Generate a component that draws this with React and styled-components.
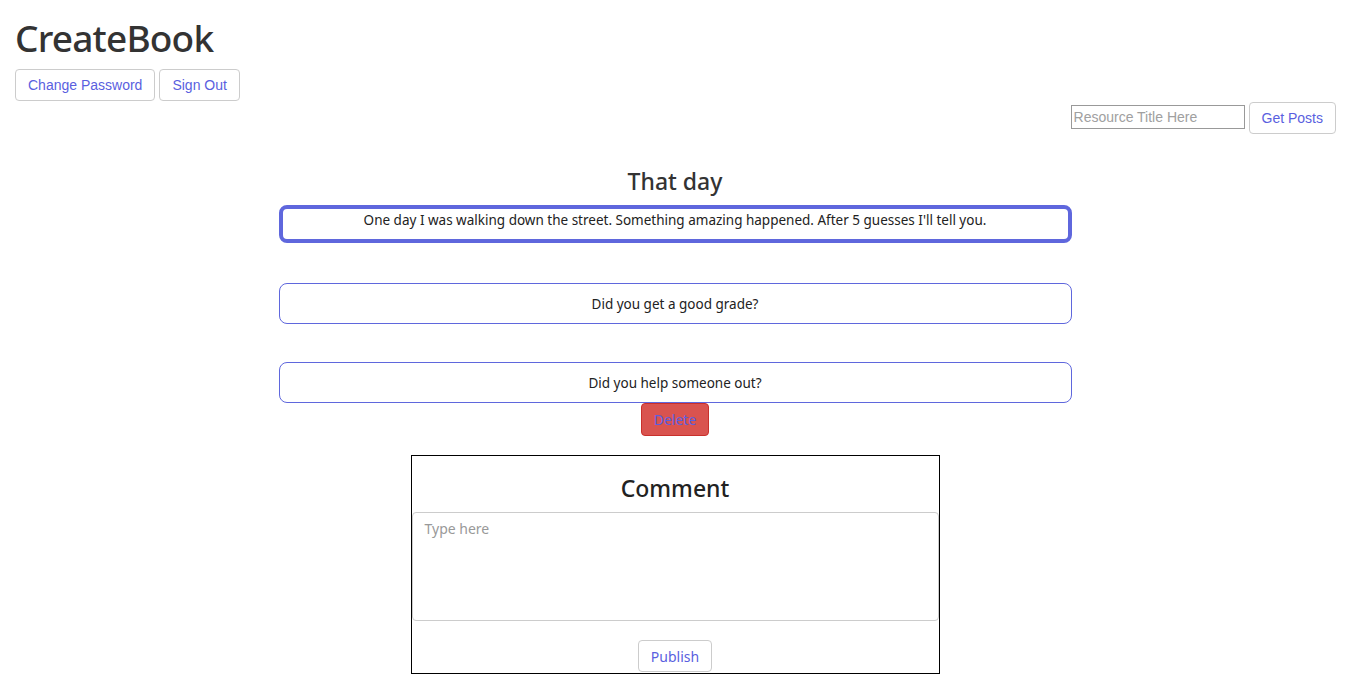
import React from "react";
import styled, { createGlobalStyle } from "styled-components";

const GlobalStyle = createGlobalStyle`
  html, body {
    margin: 0;
    padding: 0;
    background: #fff;
    font-family: "Noto Sans", "Open Sans", sans-serif;
    color: #333;
  }
  * { box-sizing: border-box; }
`;

const Page = styled.div`
  width: 1348px;
  height: 674px;
  overflow: hidden;
`;

const Header = styled.header`
  padding: 12px 12px 0 15px;
`;

const Brand = styled.h1`
  margin: 0;
  font-size: 37px;
  font-weight: 500;
  letter-spacing: -0.8px;
  line-height: 52px;
  color: #333;
`;

const ButtonRow = styled.div`
  display: flex;
  gap: 4px;
  margin-top: 5px;
`;

const Button = styled.button`
  height: ${(p) => p.$h || "32px"};
  padding: 0 12px;
  border: 1px solid ${(p) => (p.$danger ? "#c9302c" : "#ccc")};
  border-radius: 4px;
  background: ${(p) => (p.$danger ? "#d9534f" : "#fff")};
  color: #5a5fe0;
  font-family: ${(p) =>
    p.$ubuntu ? `"Noto Sans", sans-serif` : `"Liberation Sans", Arial, sans-serif`};
  font-size: 14px;
  cursor: pointer;
`;

const SearchRow = styled.div`
  display: flex;
  justify-content: flex-end;
  align-items: center;
  gap: 4px;
  margin-top: 1px;
`;

const SearchInput = styled.input`
  width: 174px;
  height: 24px;
  margin-bottom: 2px;
  border: 1px solid #999;
  padding: 0 2px;
  font-family: "Liberation Sans", Arial, sans-serif;
  font-size: 14px;
  &::placeholder { color: #a0a0a0; }
`;

const Main = styled.main`
  display: flex;
  flex-direction: column;
  align-items: center;
  padding-left: 2px;
`;

const PostTitle = styled.h2`
  margin: 33px 0 10px;
  font-size: 23px;
  font-weight: 500;
  line-height: 28px;
  color: #333;
`;

const QuestionBox = styled.div`
  width: 793px;
  border: ${(p) => (p.$active ? "4px" : "1px")} solid #5f67dd;
  border-radius: 8px;
  height: ${(p) => (p.$active ? "38px" : "41px")};
  margin-bottom: ${(p) => p.$gap};
  display: flex;
  justify-content: center;
  align-items: ${(p) => (p.$active ? "flex-start" : "center")};
  padding-top: ${(p) => (p.$active ? "2px" : "0")};
  font-size: 13.5px;
  color: #222;
`;

const CommentCard = styled.section`
  width: 529px;
  margin-top: 19px;
  border: 1px solid #000;
  display: flex;
  flex-direction: column;
  align-items: center;
  padding-bottom: 1px;
`;

const CommentTitle = styled.h2`
  margin: 18px 0 10px;
  font-size: 23px;
  font-weight: 500;
  line-height: 28px;
  color: #222;
`;

const TextArea = styled.textarea`
  width: 527px;
  height: 109px;
  border: 1px solid #ccc;
  border-radius: 4px;
  padding: 6px 12px;
  resize: none;
  font-family: "Noto Sans", sans-serif;
  font-size: 14px;
  margin-bottom: 19px;
  &::placeholder { color: #999; }
`;

const questions = [
  { text: "One day I was walking down the street. Something amazing happened. After 5 guesses I'll tell you.", active: true, gap: "40px" },
  { text: "Did you get a good grade?", gap: "38px" },
  { text: "Did you help someone out?", gap: "0" },
];

export default function App() {
  return (
    <Page>
      <GlobalStyle />
      <Header>
        <Brand>CreateBook</Brand>
        <ButtonRow>
          <Button>Change Password</Button>
          <Button>Sign Out</Button>
        </ButtonRow>
        <SearchRow>
          <SearchInput placeholder="Resource Title Here" />
          <Button>Get Posts</Button>
        </SearchRow>
      </Header>
      <Main>
        <PostTitle>That day</PostTitle>
        {questions.map((q, i) => (
          <QuestionBox key={i} $active={q.active} $gap={q.gap}>
            {q.text}
          </QuestionBox>
        ))}
        <Button $danger $ubuntu $h="33px">Delete</Button>
        <CommentCard>
          <CommentTitle>Comment</CommentTitle>
          <TextArea placeholder="Type here" />
          <Button $ubuntu>Publish</Button>
        </CommentCard>
      </Main>
    </Page>
  );
}
